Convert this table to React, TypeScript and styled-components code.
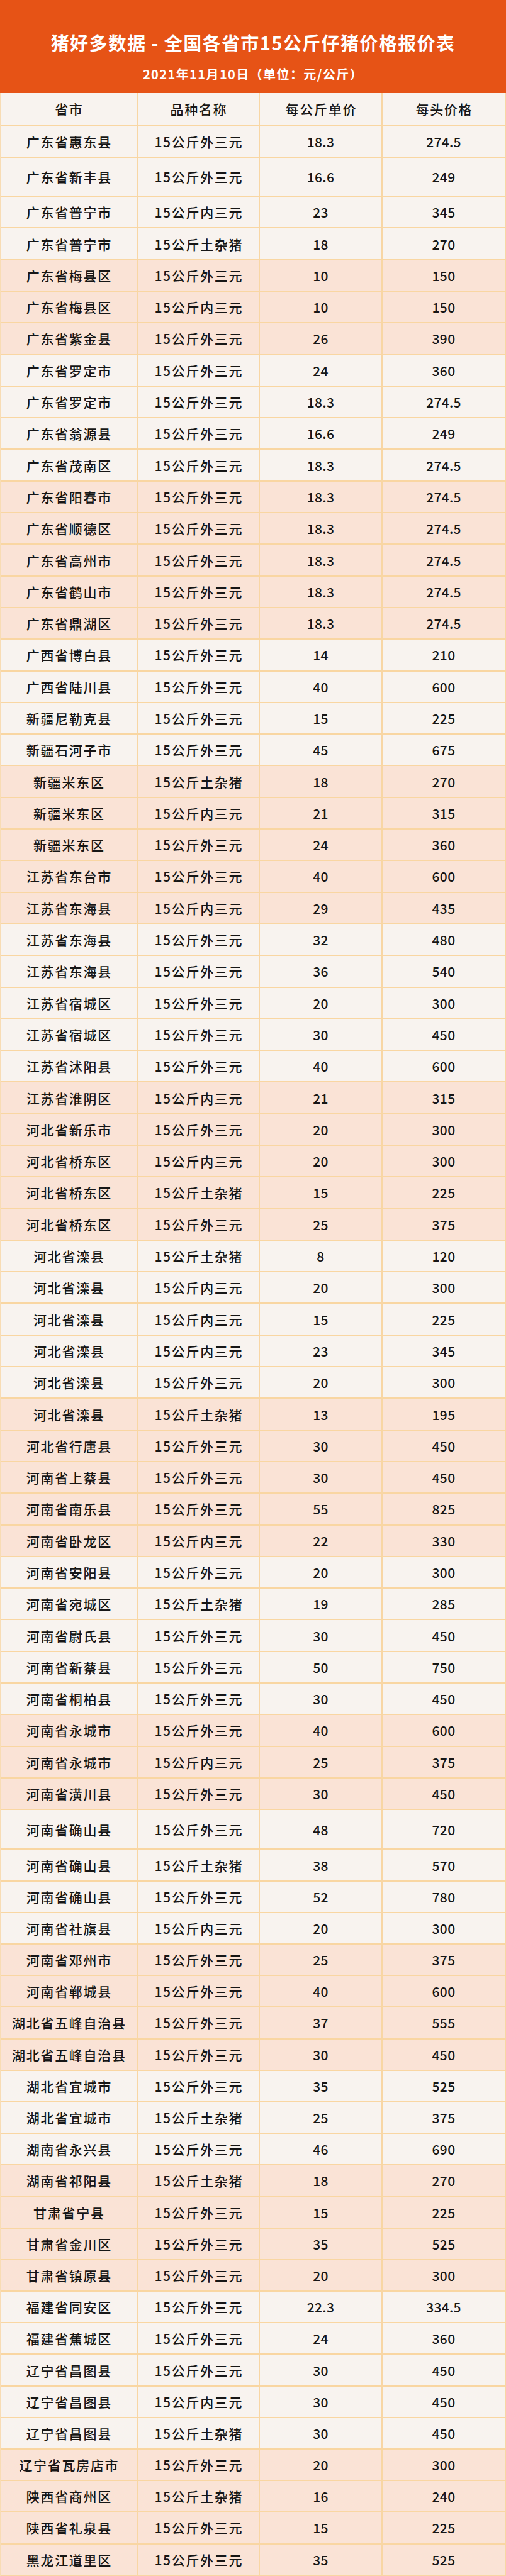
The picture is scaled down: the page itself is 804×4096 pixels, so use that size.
import React from "react";
import styled, { createGlobalStyle } from "styled-components";

const GlobalStyle = createGlobalStyle`
  html, body {
    margin: 0;
    padding: 0;
    background: #ffffff;
  }
  body {
    font-family: "Noto Sans CJK SC", "Noto Sans", "Liberation Sans", sans-serif;
  }
`;

const Page = styled.div`
  width: 804px;
  display: flex;
  flex-direction: column;
`;

const Banner = styled.header`
  height: 148px;
  background: #e65316;
  display: flex;
  flex-direction: column;
  align-items: center;
  box-sizing: border-box;
  padding-top: 50px;
  color: #ffffff;
`;

const Title = styled.h1`
  margin: 0;
  font-size: 29px;
  line-height: 34px;
  font-weight: 700;
  letter-spacing: 1.4px;
  white-space: nowrap;
`;

const DateLine = styled.div`
  margin-top: 21px;
  font-size: 20px;
  line-height: 26px;
  font-weight: 700;
  letter-spacing: 1.4px;
  white-space: nowrap;
`;

const Table = styled.div`
  display: flex;
  flex-direction: column;
  border-left: 1px solid #f8dcb4;
  box-sizing: border-box;
`;

const Row = styled.div<{ $h: number; $pink?: boolean }>`
  display: grid;
  grid-template-columns: 218px 194px 195px 196px;
  height: ${(p) => p.$h}px;
  background: ${(p) => (p.$pink ? "#fae3d6" : "#f8f3ef")};
`;

const Cell = styled.div<{ $num?: boolean }>`
  display: flex;
  align-items: center;
  justify-content: center;
  box-sizing: border-box;
  border-right: 2px solid #f8d6a4;
  border-bottom: 2.5px solid #f9d6a2;
  color: #161616;
  font-size: 21px;
  font-weight: 500;
  letter-spacing: ${(p) => (p.$num ? "0.3px" : "1.7px")};
  white-space: nowrap;
  padding-left: ${(p) => (p.$num ? "0" : "1.7px")};
`;

type Item = [string, string, string, string];

const rows: Item[] = [
  ["广东省惠东县", "15公斤外三元", "18.3", "274.5"],
  ["广东省新丰县", "15公斤外三元", "16.6", "249"],
  ["广东省普宁市", "15公斤内三元", "23", "345"],
  ["广东省普宁市", "15公斤土杂猪", "18", "270"],
  ["广东省梅县区", "15公斤外三元", "10", "150"],
  ["广东省梅县区", "15公斤内三元", "10", "150"],
  ["广东省紫金县", "15公斤外三元", "26", "390"],
  ["广东省罗定市", "15公斤外三元", "24", "360"],
  ["广东省罗定市", "15公斤外三元", "18.3", "274.5"],
  ["广东省翁源县", "15公斤外三元", "16.6", "249"],
  ["广东省茂南区", "15公斤外三元", "18.3", "274.5"],
  ["广东省阳春市", "15公斤外三元", "18.3", "274.5"],
  ["广东省顺德区", "15公斤外三元", "18.3", "274.5"],
  ["广东省高州市", "15公斤外三元", "18.3", "274.5"],
  ["广东省鹤山市", "15公斤外三元", "18.3", "274.5"],
  ["广东省鼎湖区", "15公斤外三元", "18.3", "274.5"],
  ["广西省博白县", "15公斤外三元", "14", "210"],
  ["广西省陆川县", "15公斤外三元", "40", "600"],
  ["新疆尼勒克县", "15公斤外三元", "15", "225"],
  ["新疆石河子市", "15公斤外三元", "45", "675"],
  ["新疆米东区", "15公斤土杂猪", "18", "270"],
  ["新疆米东区", "15公斤内三元", "21", "315"],
  ["新疆米东区", "15公斤外三元", "24", "360"],
  ["江苏省东台市", "15公斤外三元", "40", "600"],
  ["江苏省东海县", "15公斤内三元", "29", "435"],
  ["江苏省东海县", "15公斤外三元", "32", "480"],
  ["江苏省东海县", "15公斤外三元", "36", "540"],
  ["江苏省宿城区", "15公斤外三元", "20", "300"],
  ["江苏省宿城区", "15公斤外三元", "30", "450"],
  ["江苏省沭阳县", "15公斤外三元", "40", "600"],
  ["江苏省淮阴区", "15公斤内三元", "21", "315"],
  ["河北省新乐市", "15公斤外三元", "20", "300"],
  ["河北省桥东区", "15公斤内三元", "20", "300"],
  ["河北省桥东区", "15公斤土杂猪", "15", "225"],
  ["河北省桥东区", "15公斤外三元", "25", "375"],
  ["河北省滦县", "15公斤土杂猪", "8", "120"],
  ["河北省滦县", "15公斤内三元", "20", "300"],
  ["河北省滦县", "15公斤内三元", "15", "225"],
  ["河北省滦县", "15公斤内三元", "23", "345"],
  ["河北省滦县", "15公斤外三元", "20", "300"],
  ["河北省滦县", "15公斤土杂猪", "13", "195"],
  ["河北省行唐县", "15公斤外三元", "30", "450"],
  ["河南省上蔡县", "15公斤外三元", "30", "450"],
  ["河南省南乐县", "15公斤外三元", "55", "825"],
  ["河南省卧龙区", "15公斤内三元", "22", "330"],
  ["河南省安阳县", "15公斤外三元", "20", "300"],
  ["河南省宛城区", "15公斤土杂猪", "19", "285"],
  ["河南省尉氏县", "15公斤外三元", "30", "450"],
  ["河南省新蔡县", "15公斤外三元", "50", "750"],
  ["河南省桐柏县", "15公斤外三元", "30", "450"],
  ["河南省永城市", "15公斤外三元", "40", "600"],
  ["河南省永城市", "15公斤内三元", "25", "375"],
  ["河南省潢川县", "15公斤外三元", "30", "450"],
  ["河南省确山县", "15公斤外三元", "48", "720"],
  ["河南省确山县", "15公斤土杂猪", "38", "570"],
  ["河南省确山县", "15公斤外三元", "52", "780"],
  ["河南省社旗县", "15公斤内三元", "20", "300"],
  ["河南省邓州市", "15公斤外三元", "25", "375"],
  ["河南省郸城县", "15公斤外三元", "40", "600"],
  ["湖北省五峰自治县", "15公斤外三元", "37", "555"],
  ["湖北省五峰自治县", "15公斤外三元", "30", "450"],
  ["湖北省宜城市", "15公斤外三元", "35", "525"],
  ["湖北省宜城市", "15公斤土杂猪", "25", "375"],
  ["湖南省永兴县", "15公斤外三元", "46", "690"],
  ["湖南省祁阳县", "15公斤土杂猪", "18", "270"],
  ["甘肃省宁县", "15公斤外三元", "15", "225"],
  ["甘肃省金川区", "15公斤外三元", "35", "525"],
  ["甘肃省镇原县", "15公斤外三元", "20", "300"],
  ["福建省同安区", "15公斤外三元", "22.3", "334.5"],
  ["福建省蕉城区", "15公斤外三元", "24", "360"],
  ["辽宁省昌图县", "15公斤外三元", "30", "450"],
  ["辽宁省昌图县", "15公斤内三元", "30", "450"],
  ["辽宁省昌图县", "15公斤土杂猪", "30", "450"],
  ["辽宁省瓦房店市", "15公斤外三元", "20", "300"],
  ["陕西省商州区", "15公斤土杂猪", "16", "240"],
  ["陕西省礼泉县", "15公斤外三元", "15", "225"],
  ["黑龙江道里区", "15公斤外三元", "35", "525"],
];

const pinkRanges: [number, number][] = [
  [5, 7],
  [12, 16],
  [21, 25],
  [31, 35],
  [41, 45],
  [51, 53],
  [58, 61],
  [65, 68],
  [74, 77],
];

const isPink = (n: number) => pinkRanges.some(([a, b]) => n >= a && n <= b);

const rowHeight = (n: number) => {
  if (n === 1) return 50;
  if (n === 2) return 62.3;
  if (n === 54) return 63.2;
  if (n > 54) return 50.2;
  return 50.3;
};

export default function App() {
  return (
    <Page>
      <GlobalStyle />
      <Banner>
        <Title>猪好多数据 - 全国各省市15公斤仔猪价格报价表</Title>
        <DateLine>2021年11月10日（单位：元/公斤）</DateLine>
      </Banner>
      <Table>
        <Row $h={52.8}>
          <Cell>省市</Cell>
          <Cell>品种名称</Cell>
          <Cell>每公斤单价</Cell>
          <Cell>每头价格</Cell>
        </Row>
        {rows.map((r, i) => {
          const n = i + 1;
          return (
            <Row key={n} $h={rowHeight(n)} $pink={isPink(n)}>
              <Cell>{r[0]}</Cell>
              <Cell>{r[1]}</Cell>
              <Cell $num>{r[2]}</Cell>
              <Cell $num>{r[3]}</Cell>
            </Row>
          );
        })}
      </Table>
    </Page>
  );
}
